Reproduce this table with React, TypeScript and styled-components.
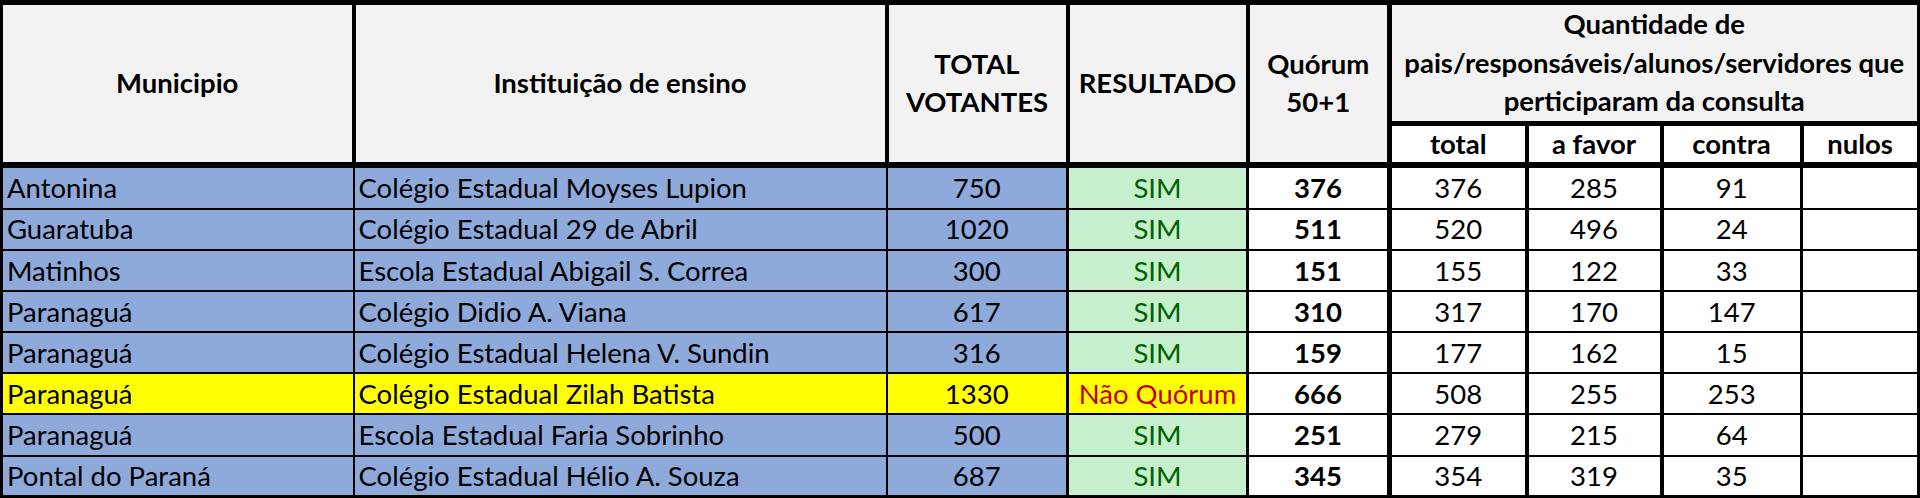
import React from 'react'
import styled, { createGlobalStyle } from 'styled-components'

const GlobalStyle = createGlobalStyle`
    html, body {
        margin: 0;
        padding: 0;
        background: #ffffff;
    }
    body {
        font-family: Lato, "Open Sans", "Liberation Sans", sans-serif;
        overflow: hidden;
    }
`

const Sheet = styled.table`
    width: 1920px;
    table-layout: fixed;
    border-collapse: collapse;
    border-top: 5px solid #000;
    border-left: 3px solid #000;
    border-right: 4px solid #000;
    border-bottom: 3px solid #000;
    font-size: 27.5px;
    color: #000;
`

const TitleRow = styled.tr`
    height: 120px;
`

const SubTitleRow = styled.tr`
    height: 41.5px;
`

const DataRow = styled.tr`
    height: 41.2px;

    &:first-child {
        height: 44px;
    }
`

const HeadCell = styled.th<{ $edge?: number; $under?: number }>`
    background: #f2f2f2;
    font-weight: 700;
    text-align: center;
    vertical-align: middle;
    line-height: 38.5px;
    white-space: nowrap;
    padding: 0;
    border-left: ${p => p.$edge ?? 4}px solid #000;
    border-bottom: ${p => p.$under ?? 6}px solid #000;
`

const SubHeadCell = styled(HeadCell)`
    background: #ffffff;
    line-height: 33px;
`

const Cell = styled.td<{ $fill: string; $ink?: string; $bold?: boolean; $align?: 'left' | 'center'; $edge: number }>`
    background: ${p => p.$fill};
    color: ${p => p.$ink ?? '#000'};
    font-weight: ${p => (p.$bold ? 700 : 400)};
    text-align: ${p => p.$align ?? 'center'};
    vertical-align: middle;
    white-space: nowrap;
    overflow: hidden;
    padding: 0 4px;
    line-height: 1;
    border-left: ${p => p.$edge}px solid #000;
    border-bottom: 2px solid #000;
`

type Escola = {
    municipio: string
    instituicao: string
    votantes: number
    resultado: string
    quorum: number
    total: number
    aFavor: number
    contra: number
}

const escolas: Escola[] = [
    { municipio: 'Antonina', instituicao: 'Colégio Estadual Moyses Lupion', votantes: 750, resultado: 'SIM', quorum: 376, total: 376, aFavor: 285, contra: 91 },
    { municipio: 'Guaratuba', instituicao: 'Colégio Estadual 29 de Abril', votantes: 1020, resultado: 'SIM', quorum: 511, total: 520, aFavor: 496, contra: 24 },
    { municipio: 'Matinhos', instituicao: 'Escola Estadual Abigail S. Correa', votantes: 300, resultado: 'SIM', quorum: 151, total: 155, aFavor: 122, contra: 33 },
    { municipio: 'Paranaguá', instituicao: 'Colégio Didio A. Viana', votantes: 617, resultado: 'SIM', quorum: 310, total: 317, aFavor: 170, contra: 147 },
    { municipio: 'Paranaguá', instituicao: 'Colégio Estadual Helena V. Sundin', votantes: 316, resultado: 'SIM', quorum: 159, total: 177, aFavor: 162, contra: 15 },
    { municipio: 'Paranaguá', instituicao: 'Colégio Estadual Zilah Batista', votantes: 1330, resultado: 'Não Quórum', quorum: 666, total: 508, aFavor: 255, contra: 253 },
    { municipio: 'Paranaguá', instituicao: 'Escola Estadual Faria Sobrinho', votantes: 500, resultado: 'SIM', quorum: 251, total: 279, aFavor: 215, contra: 64 },
    { municipio: 'Pontal do Paraná', instituicao: 'Colégio Estadual Hélio A. Souza', votantes: 687, resultado: 'SIM', quorum: 345, total: 354, aFavor: 319, contra: 35 },
]

const BLUE = '#8eaadb'
const YELLOW = '#ffff00'
const GREEN_FILL = '#c6efce'
const GREEN_INK = '#006100'
const RED_INK = '#c00000'

const colWidths = [352, 533, 181, 180, 142, 137, 135, 140, 117]

const App = () => {
    return (
        <>
            <GlobalStyle />
            <Sheet>
                <colgroup>
                    {colWidths.map((w, i) => (
                        <col key={i} style={{ width: w }} />
                    ))}
                </colgroup>
                <thead>
                    <TitleRow>
                        <HeadCell rowSpan={2} $edge={3}>Municipio</HeadCell>
                        <HeadCell rowSpan={2}>Instituição de ensino</HeadCell>
                        <HeadCell rowSpan={2}>TOTAL<br />VOTANTES</HeadCell>
                        <HeadCell rowSpan={2}>RESULTADO</HeadCell>
                        <HeadCell rowSpan={2}>Quórum<br />50+1</HeadCell>
                        <HeadCell colSpan={4} $edge={5} $under={5}>
                            Quantidade de<br />
                            pais/responsáveis/alunos/servidores que<br />
                            perticiparam da consulta
                        </HeadCell>
                    </TitleRow>
                    <SubTitleRow>
                        <SubHeadCell $edge={5}>total</SubHeadCell>
                        <SubHeadCell>a favor</SubHeadCell>
                        <SubHeadCell>contra</SubHeadCell>
                        <SubHeadCell>nulos</SubHeadCell>
                    </SubTitleRow>
                </thead>
                <tbody>
                    {escolas.map((e, i) => {
                        const semQuorum = e.resultado !== 'SIM'
                        const fill = semQuorum ? YELLOW : BLUE
                        return (
                            <DataRow key={i}>
                                <Cell $fill={fill} $align="left" $edge={3}>{e.municipio}</Cell>
                                <Cell $fill={fill} $align="left" $edge={2}>{e.instituicao}</Cell>
                                <Cell $fill={fill} $edge={2}>{e.votantes}</Cell>
                                <Cell $fill={semQuorum ? YELLOW : GREEN_FILL} $ink={semQuorum ? RED_INK : GREEN_INK} $edge={3}>
                                    {e.resultado}
                                </Cell>
                                <Cell $fill="#ffffff" $bold $edge={3}>{e.quorum}</Cell>
                                <Cell $fill="#ffffff" $edge={5}>{e.total}</Cell>
                                <Cell $fill="#ffffff" $edge={4}>{e.aFavor}</Cell>
                                <Cell $fill="#ffffff" $edge={4}>{e.contra}</Cell>
                                <Cell $fill="#ffffff" $edge={3}></Cell>
                            </DataRow>
                        )
                    })}
                </tbody>
            </Sheet>
        </>
    )
}

export default App
